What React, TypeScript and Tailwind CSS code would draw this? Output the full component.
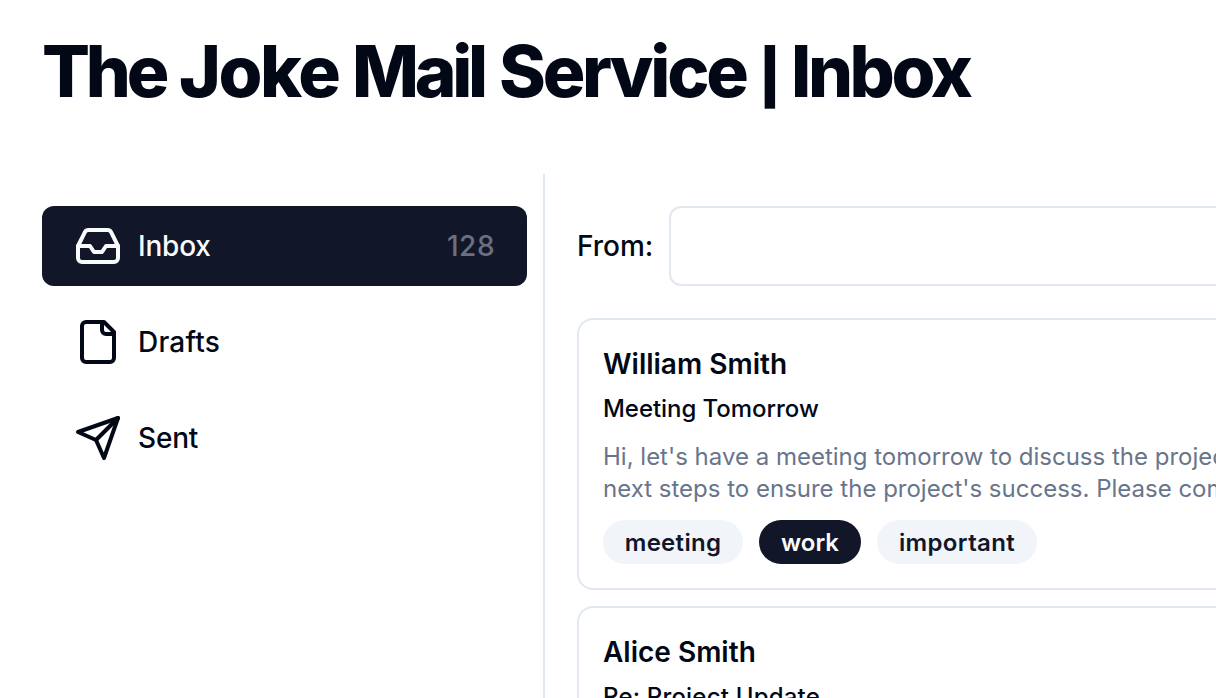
import type { ReactNode } from "react";

function Icon({ children }: { children: ReactNode }) {
  return (
    <svg
      viewBox="0 0 24 24"
      className="mr-4 size-12 shrink-0"
      fill="none"
      stroke="currentColor"
      strokeWidth={2}
      strokeLinecap="round"
      strokeLinejoin="round"
    >
      {children}
    </svg>
  );
}

const folders = [
  {
    label: "Inbox",
    tracking: "tracking-[-0.2px]",
    count: "128",
    active: true,
    icon: (
      <Icon>
        <path d="M22 12h-6l-2 3h-4l-2-3H2" />
        <path d="M5.45 5.11 2 12v6a2 2 0 0 0 2 2h16a2 2 0 0 0 2-2v-6l-3.45-6.89A2 2 0 0 0 16.76 4H7.24a2 2 0 0 0-1.79 1.11z" />
      </Icon>
    ),
  },
  {
    label: "Drafts",
    tracking: "tracking-[0.2px]",
    icon: (
      <Icon>
        <path d="M15 2H6a2 2 0 0 0-2 2v16a2 2 0 0 0 2 2h12a2 2 0 0 0 2-2V7Z" />
        <path d="M14 2v4a2 2 0 0 0 2 2h4" />
      </Icon>
    ),
  },
  {
    label: "Sent",
    tracking: "tracking-[-0.2px]",
    icon: (
      <Icon>
        <path d="m22 2-7 20-4-9-9-4Z" />
        <path d="M22 2 11 13" />
      </Icon>
    ),
  },
];

const mails = [
  {
    name: "William Smith",
    subject: "Meeting Tomorrow",
    tracking: "tracking-[-0.05px]",
    lines: [
      "Hi, let's have a meeting tomorrow to discuss the project",
      "next steps to ensure the project's success. Please come",
    ],
    tags: [
      { label: "meeting", style: "w-[140px] tracking-[0.3px] bg-[#f1f5f9] text-[#111629]" },
      { label: "work", style: "w-[102px] bg-[#111629] text-[#f8fafc]" },
      { label: "important", style: "w-[160px] tracking-[0.35px] bg-[#f1f5f9] text-[#111629]" },
    ],
  },
  { name: "Alice Smith", subject: "Re: Project Update", tracking: "tracking-[0.2px]", lines: [], tags: [] },
];

export default function App() {
  return (
    <div className="flex h-[698px] w-[1216px] flex-col overflow-hidden bg-white font-['Inter',sans-serif] text-[#020815]">
      <h1 className="flex h-[174px] shrink-0 items-start pt-[35px] pl-[42px] text-[71px] leading-[72px] font-extrabold whitespace-pre">
        <span className="w-[137px] tracking-[-4.2px]">{"The "}</span>
        <span className="w-[173px] tracking-[-2.4px]">{"Joke "}</span>
        <span className="w-[147px] tracking-[-4.3px]">{"Mail "}</span>
        <span className="w-[257px] tracking-[-3.2px]">{"Service "}</span>
        <span className="w-[35px] origin-[16px_36px] translate-y-[5px] scale-x-90 scale-y-[0.75]">{"| "}</span>
        <span className="tracking-[-3.4px]">Inbox</span>
      </h1>
      <div className="flex min-h-0 flex-1">
        <nav className="flex w-[545px] shrink-0 flex-col gap-4 border-r-2 border-[#e2e8f0] pt-8 pr-4 pl-[42px]">
          {folders.map(({ label, icon, count, active, tracking }) => (
            <a
              key={label}
              className={`flex h-20 shrink-0 items-center rounded-[12px] px-8 text-[28px] font-medium ${active ? "bg-[#111629] text-[#f8fafc]" : ""}`}
            >
              {icon}
              <span className={tracking}>{label}</span>
              {count && <span className="ml-auto tracking-[0.5px] text-[#6b7080]">{count}</span>}
            </a>
          ))}
        </nav>
        <main className="flex w-[900px] shrink-0 flex-col pt-8 pl-8">
          <div className="mb-8 flex h-20 shrink-0 items-center gap-4">
            <label className="text-[28px] font-medium">From:</label>
            <div className="h-20 flex-1 rounded-[12px] border-2 border-[#e2e8f0]" />
          </div>
          <div className="flex flex-col gap-4">
            {mails.map((m) => (
              <article key={m.name} className="h-[272px] shrink-0 rounded-[16px] border-2 border-[#e2e8f0] px-6 pt-6">
                <h2 className="text-[28px] leading-10 font-semibold">{m.name}</h2>
                <p className={`mt-[9px] text-[24px] leading-8 font-medium ${m.tracking}`}>{m.subject}</p>
                <div className="mt-4 text-[24px] leading-8 whitespace-nowrap text-[#68758b]">
                  {m.lines.map((l) => (
                    <p key={l}>{l}</p>
                  ))}
                </div>
                <div className="mt-[15px] flex gap-4">
                  {m.tags.map((t) => (
                    <span
                      key={t.label}
                      className={`flex h-11 items-center justify-center rounded-full pt-0.5 text-[24px] font-semibold ${t.style}`}
                    >
                      {t.label}
                    </span>
                  ))}
                </div>
              </article>
            ))}
          </div>
        </main>
      </div>
    </div>
  );
}
